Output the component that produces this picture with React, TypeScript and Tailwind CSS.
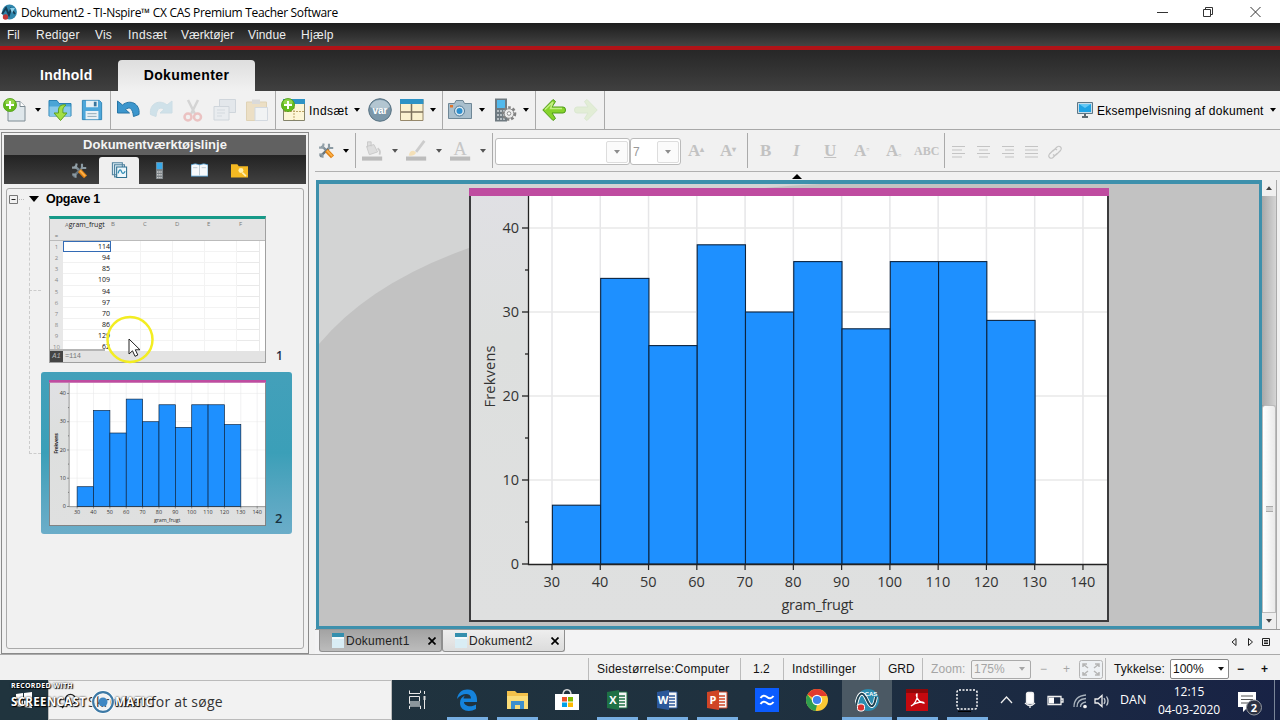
import { ReactNode } from "react";
import clsx from "clsx";

const FREQUENCIES = [7, 34, 26, 38, 30, 36, 28, 36, 36, 29];
const X_TICKS = [30, 40, 50, 60, 70, 80, 90, 100, 110, 120, 130, 140];
const SHEET_VALUES = [114, 94, 85, 109, 94, 97, 70, 86, 129, 62];

const xPos = (value: number) => 83 + ((value - 30) / 10) * 48.27;
const yPos = (value: number) => 376 - value * 8.4;

type HistogramProps = {
  className: string;
  small?: boolean;
};

function Histogram({ className, small }: HistogramProps) {
  const fontSize = small ? 16 : 14.5;
  return (
    <svg
      viewBox="0 0 640 434"
      preserveAspectRatio="none"
      className={className}
      fontFamily='"Open Sans", "Noto Sans", sans-serif'
      fontWeight="400"
      fill="#333"
    >
      <defs>
        <linearGradient id="page" x1="0" y1="0" x2="0" y2="1">
          <stop offset="0" stopColor="#e0e0e4" />
          <stop offset="0.35" stopColor="#dddfde" />
          <stop offset="1" stopColor="#dfe0e0" />
        </linearGradient>
      </defs>
      <rect width="640" height="434" fill="url(#page)" />
      <rect x="59" y="8" width="580" height="368" fill="#fff" />
      {X_TICKS.map((tick) => (
        <path key={tick} d={`M${xPos(tick)} 8V376`} stroke="#e6e6e8" strokeWidth="1.5" />
      ))}
      {[10, 20, 30, 40].map((tick) => (
        <path key={tick} d={`M60 ${yPos(tick)}H638`} stroke="#e9e9e9" strokeWidth="1.5" />
      ))}
      {FREQUENCIES.map((frequency, i) => (
        <rect
          key={i}
          x={xPos(30 + i * 10) + (small ? 0 : 0.4)}
          y={yPos(frequency)}
          width="48.27"
          height={frequency * 8.4}
          fill="#1e90ff"
          stroke="#0c2440"
          strokeWidth={small ? 2 : 1.1}
        />
      ))}
      <path d="M59.5 8V376.5H638" fill="none" stroke="#222" strokeWidth="1.3" />
      {X_TICKS.map((tick) => (
        <g key={tick}>
          <path d={`M${xPos(tick)} 376v6`} stroke="#222" strokeWidth="1.2" />
          <text x={xPos(tick) - 0.2} y="398.5" fontSize={fontSize} textAnchor="middle">
            {tick}
          </text>
        </g>
      ))}
      {[0, 10, 20, 30, 40].map((tick) => (
        <g key={tick}>
          <path d={`M53 ${yPos(tick)}h6`} stroke="#222" strokeWidth="1.3" />
          <text x="50" y={yPos(tick) + 5.3} fontSize={fontSize} textAnchor="end">
            {tick}
          </text>
        </g>
      ))}
      {[5, 15, 25, 35].map((tick) => (
        <path key={tick} d={`M56 ${yPos(tick)}h3`} stroke="#222" strokeWidth="1.3" />
      ))}
      <text
        transform="translate(26 188.5) rotate(-90)"
        fontSize={fontSize}
        textAnchor="middle"
        textLength="62"
        fontWeight={small ? 700 : 400}
      >
        Frekvens
      </text>
      <text x="348.5" y="421.5" fontSize={fontSize} textAnchor="middle" textLength={small ? 78 : 72}>
        gram_frugt
      </text>
      <path d="M1 8V433H639V8" fill="none" stroke="#3b3b3d" strokeWidth="2" />
      <rect width="640" height="8" fill="#bf4ca0" />
    </svg>
  );
}

function Caret({ className }: { className?: string }) {
  return (
    <svg viewBox="0 0 6 4" className={clsx("h-[4px] w-[6px] shrink-0", className)}>
      <path d="M0 0h6L3 3.8z" fill="currentColor" />
    </svg>
  );
}

type IconProps = {
  size?: string;
  className?: string;
  children: ReactNode;
};

function Icon({ size = "size-6", className, children }: IconProps) {
  return (
    <svg viewBox="0 0 24 24" fill="none" className={clsx("shrink-0", size, className)}>
      {children}
    </svg>
  );
}

function PlusBadge() {
  return (
    <>
      <circle cx="7" cy="7" r="6.6" fill="#65bb1d" stroke="#4b9a12" strokeWidth="0.7" />
      <ellipse cx="7" cy="4.2" rx="4.6" ry="3" fill="#a5e05b" opacity="0.7" />
      <path d="M7 3v8M3 7h8" stroke="#fff" strokeWidth="2" />
    </>
  );
}

function ToolsIcon({ size }: { size: string }) {
  return (
    <Icon size={size}>
      <path d="M3 20.5 16.5 7.5" stroke="#66757e" strokeWidth="3.4" />
      <path d="M15.5 2.500v6h6M1.8 17.500l4.400.4.3 4.400" stroke="#8b9aa3" strokeWidth="3" />
      <path d="M5 5.5 11 11" stroke="#7e8d96" strokeWidth="3.4" />
      <path d="M1.500 8h5.200L8 2" stroke="#92a0a8" strokeWidth="3" />
      <path d="m12 12 8.5 9" stroke="#e08214" strokeWidth="6" />
      <path d="m12.5 12 7.5 8" stroke="#fdb24a" strokeWidth="2.500" />
    </Icon>
  );
}

function TitleBar() {
  return (
    <div className="flex h-[23px] shrink-0 items-center bg-white text-black">
      <svg viewBox="0 0 16 16" className="ml-px size-4">
        <circle cx="8.5" cy="8" r="7.4" fill="#2f86ac" />
        <path d="M1 10 5 4l3 7 2-6 4 5" fill="none" stroke="#173e55" strokeWidth="2" />
        <path d="M9 4h5l-3 5z" fill="#8ed0e8" />
        <circle cx="4.5" cy="13" r="2.7" fill="#c33836" />
      </svg>
      <span className="ml-1 pt-[2px] font-['Open_Sans','Noto_Sans',sans-serif] text-[12px] tracking-[-0.310px] whitespace-nowrap">
        Dokument2 - TI-Nspire™ CX CAS Premium Teacher Software
      </span>
      <svg viewBox="0 0 110 12" className="mr-[14px] ml-auto h-3 w-[110px]" fill="none" stroke="#333">
        <path d="M1 6.500h11M47.500 3.500h7v7h-7zM49.500 3.500v-2h7v7h-2M94.500 1l10 10M104.500 1l-10 10" />
      </svg>
    </div>
  );
}

function MenuBar() {
  return (
    <div className="flex h-[27px] shrink-0 items-center border-b-4 border-[#b01217] bg-linear-to-b from-[#1d1d1d] to-[#434343] pl-[7px] text-[12px] text-[#eee]">
      <span className="w-[29px]">Fil</span>
      <span className="w-[59px] tracking-[0.250px]">Rediger</span>
      <span className="w-[33px] tracking-[0.200px]">Vis</span>
      <span className="w-[53px] tracking-[0.450px]">Indsæt</span>
      <span className="w-[67px] tracking-[0.050px]">Værktøjer</span>
      <span className="w-[53px] tracking-[0.150px]">Vindue</span>
      <span className="tracking-[0.300px]">Hjælp</span>
    </div>
  );
}

function WorkspaceTabs() {
  return (
    <div className="flex h-[41px] shrink-0 items-end bg-linear-to-b from-[#272727] to-[#404040] text-[14px] font-bold">
      <div className="flex h-[31px] w-[118px] items-center pl-[40px] tracking-[0.300px] text-white">Indhold</div>
      <div className="flex h-[31px] w-[137px] items-center justify-center rounded-t-[4px] bg-linear-to-b from-[#dedede] to-[#f1f1f1] tracking-[0.400px] text-black">
        Dokumenter
      </div>
    </div>
  );
}

function MainToolbar() {
  return (
    <div className="flex h-[39px] shrink-0 border-b border-[#a8a8a8] bg-[#f1f1f1] text-[12px] text-black">
      <div className="flex w-[111px] items-center border-r border-[#aaa] pl-[3px]">
        <Icon>
          <path d="M5 3.500h12l5 5V23H5z" fill="#dfe7eb" stroke="#7e8c94" />
          <path d="M17 3.500v5h5" fill="#fff" stroke="#7e8c94" />
          <PlusBadge />
        </Icon>
        <Caret className="ml-[8px]" />
        <Icon className="ml-[7px]">
          <path d="M1 18V2.500h8l2 3h12V18z" fill="#4aa5d6" stroke="#2a81b3" />
          <path d="M1.500 18V8.500h21V18z" fill="#87c8ea" />
          <path d="M18 7c-6-1-8 2-7.500 8H6l6.500 7.500L19 15h-4c-.5-4 0-5.500 3-8z" fill="#a4de45" stroke="#5ca01d" />
        </Icon>
        <Icon size="size-[22px]" className="ml-[9px]">
          <path d="M1.500 1.500H20l2.500 2.500v18.500h-21z" fill="#4ea7da" stroke="#2b82b5" />
          <path d="M5.500 2h13v7h-13zM5 13h14v9H5z" fill="#e9f1f5" />
          <path d="M14 3h3v5h-3z" fill="#39749c" />
          <path d="M7 16h10M7 19h10" stroke="#8aa5b3" />
        </Icon>
      </div>
      <div className="flex w-[165px] items-center border-r border-[#aaa] pl-[5px]">
        <Icon size="h-6 w-[25px]">
          <path d="M1 3v12h12l-4-3.500c4-3 7-1.500 8 7l5.500-2C24 5 13 1 6 7z" fill="#3c96cd" stroke="#2675a5" />
        </Icon>
        <Icon className="ml-[8px] opacity-35">
          <path d="M23 3v12H11l4-3.500c-4-3-7-1.500-8 7l-5.500-2C0 5 11 1 18 7z" fill="#91c6dd" stroke="#8abad0" />
        </Icon>
        <Icon className="ml-[8px] opacity-30">
          <path d="m7 2 7 14M17 2l-7 14" stroke="#929292" strokeWidth="2.500" />
          <circle cx="7" cy="19" r="3.500" stroke="#df5a57" strokeWidth="2.500" />
          <circle cx="16.500" cy="19" r="3.500" stroke="#df5a57" strokeWidth="2.500" />
        </Icon>
        <Icon className="ml-[8px] opacity-30">
          <path d="M6.500 1.500h16v13h-16z" fill="#c4d2df" stroke="#8398aa" />
          <path d="M1 8.500h15V22H1z" fill="#d8e3ec" stroke="#8398aa" />
          <path d="M4 12h8M4 15h8M4 18h5" stroke="#93a7b8" />
        </Icon>
        <Icon className="ml-[8px] opacity-40">
          <path d="M1.500 4h20v18.500h-20z" fill="#e5c684" stroke="#c6a55c" />
          <path d="M7 1.500h8V6H7z" fill="#b9b9b9" />
          <path d="M10 9.500h12.500v13H10z" fill="#f3f6f9" stroke="#a7b7c7" />
        </Icon>
      </div>
      <div className="flex w-[167px] items-center border-r border-[#aaa] pl-[5px]">
        <Icon>
          <path d="M2.500 1.500h21v21h-21z" fill="#fdf6d7" stroke="#85846b" />
          <path d="M2 1h22v5H2z" fill="#2e93c5" />
          <path d="M13 6v16M3 13.500h20" stroke="#bba467" strokeDasharray="2 1" />
          <PlusBadge />
        </Icon>
        <span className="ml-[4px] w-[40px] pt-[2px] tracking-[0.450px]">Indsæt</span>
        <Caret className="ml-[5px]" />
        <Icon className="ml-[8px]">
          <circle cx="12" cy="12" r="11.300" fill="#7b97a9" stroke="#587282" />
          <path d="M2 9a10.500 10 0 0 1 20 0c-6 3-14 3-20 0z" fill="#b3c6d1" />
          <text
            x="12"
            y="15.500"
            fill="#fff"
            fontFamily='"Liberation Sans", sans-serif'
            fontSize="10"
            fontWeight="700"
            textAnchor="middle"
          >
            var
          </text>
        </Icon>
        <Icon className="ml-[8px]">
          <path d="M.5 1.500h22.500v21H.5z" fill="#fbf2d0" stroke="#96886b" />
          <path d="M0 1h23.500v5H0z" fill="#2e93c5" />
          <path d="M11.500 6v16M1 14h22" stroke="#7d725c" strokeWidth="1.500" />
        </Icon>
        <Caret className="ml-[6px]" />
      </div>
      <div className="flex w-[93px] items-center border-r border-[#aaa] pl-[5px]">
        <Icon>
          <path d="M.5 5.500h6L8 2.500h7l1.500 3h7v15H.5z" fill="#a9bfcd" stroke="#6f8796" />
          <circle cx="11.500" cy="13" r="5" fill="#d9e7ef" stroke="#527b98" />
          <circle cx="11.500" cy="13" r="3" fill="#2f8fce" />
          <path d="M2 7h3v2.500H2z" fill="#e27429" />
        </Icon>
        <Caret className="ml-[7px]" />
        <Icon className="ml-[9px]">
          <path d="M1 .5h12v23H1z" fill="#6f7a81" />
          <path d="M3 2h8v8H3z" fill="#52b9ec" />
          <path d="M3 13h8M3 17h8M3 21h8" stroke="#cfd5d8" strokeWidth="1.500" strokeDasharray="2 1" />
          <circle cx="15" cy="15.500" r="5.800" stroke="#818181" strokeWidth="3" strokeDasharray="2.500 1.800" />
          <circle cx="15" cy="15.500" r="4.800" fill="#ececec" stroke="#8d8d8d" />
          <circle cx="15" cy="15.500" r="1.800" fill="#fff" stroke="#8d8d8d" />
        </Icon>
        <Caret className="ml-[5px]" />
      </div>
      <div className="flex w-[69px] items-center border-r border-[#aaa] pl-[6px]">
        <Icon>
          <path d="M.8 12 11 1.500l2.500 2L10 9h11q2.500 0 2.500 3T21 15H10l3.500 5.500-2.500 2z" fill="#86d32c" stroke="#4e9a18" />
          <path d="M3 11.500 11 4 8.500 10.500H20" stroke="#c3ef83" strokeWidth="1.500" />
        </Icon>
        <Icon className="ml-[8px] opacity-25">
          <path d="M23.200 12 13 1.500l-2.500 2L14 9H3q-2.500 0-2.500 3T3 15h11l-3.500 5.500 2.500 2z" fill="#b6e389" stroke="#9cce74" />
        </Icon>
      </div>
      <div className="ml-auto flex items-center pr-[4px]">
        <svg viewBox="0 0 16 16" className="size-4">
          <path d="M.5.500h15v11H.5z" fill="#c8dce8" stroke="#5e7685" />
          <path d="M2 2h12v8H2z" fill="#1fa3e4" />
          <path d="m2 2 6 4 6-4z" fill="#64c8f5" />
          <path d="M5 15h6M8 12v3" stroke="#5e6a71" strokeWidth="2" />
        </svg>
        <span className="ml-[4px] w-[167px] pt-[2px] tracking-[0.270px] whitespace-nowrap">
          Eksempelvisning af dokument
        </span>
        <Caret className="ml-[6px]" />
      </div>
    </div>
  );
}

function SheetThumbnail() {
  return (
    <div className="flex h-[147px] w-[217px] flex-col border border-t-[3px] border-[#a0a0a0] border-t-[#179a88] bg-white font-['Open_Sans',sans-serif] text-[7px] leading-none font-normal text-[#111]">
      <div className="grid h-[22px] shrink-0 grid-cols-[13px_48px_32px_32px_32px_32px_1fr] border-b border-[#bbb] bg-[#e4e4e4] pt-[2px] text-[6px] text-[#777]">
        <span className="pt-[12px] text-center">=</span>
        <span className="pl-[2px] whitespace-nowrap">
          A<span className="text-[7px] text-[#222]">gram_frugt</span>
        </span>
        <span>B</span>
        <span>C</span>
        <span>D</span>
        <span>E</span>
        <span>F</span>
      </div>
      <div className="relative h-[110px] overflow-hidden">
        {SHEET_VALUES.map((value, i) => (
          <div key={i} className="grid h-[11.150px] grid-cols-[13px_48px_30px_32px_32px_32px_1fr]">
            <span className="bg-[#e8e8e8] pt-[3px] text-center text-[6px] text-[#888]">{i + 1}</span>
            <span
              className={clsx(
                "text-right",
                i === 0
                  ? "border border-[#336bb5] pt-[1px]"
                  : "border-b border-[#f1f1f1] pt-[2px] pr-px"
              )}
            >
              {value}
            </span>
            <span className="border-r border-b border-[#f3f3f3]" />
            <span className="border-r border-b border-[#f3f3f3]" />
            <span className="border-r border-b border-[#f3f3f3]" />
            <span className="border-r border-b border-[#f3f3f3]" />
            <span className="mr-[5px] border-r border-b border-[#e9e9e9]" />
          </div>
        ))}
        <div className="absolute bottom-0 left-0 h-[2px] w-[55px] bg-[#b5b5b5]" />
      </div>
      <div className="flex flex-1 items-center bg-[#e3e3e3] font-['Liberation_Mono',monospace] text-[7px] text-[#777]">
        <span className="flex h-full w-[13px] items-center justify-center bg-[#444] text-[#bbb] italic">A1</span>
        <span className="pl-[2px] tracking-[-0.300px]">=114</span>
      </div>
    </div>
  );
}

function DocumentPanel() {
  return (
    <div className="mt-[2px] ml-px flex h-[522px] w-[308px] shrink-0 flex-col border border-[#8a8a8a] p-[2px]">
      <div className="flex h-[20px] shrink-0 items-center justify-center bg-[#616161] text-[13px] font-bold text-[#f4f4f4]">
        Dokumentværktøjslinje
      </div>
      <div className="flex h-[29px] shrink-0 items-end bg-linear-to-b from-[#232323] to-[#414141] pl-[55px]">
        <span className="flex h-7 w-[40px] items-center justify-center">
          <ToolsIcon size="size-[17px]" />
        </span>
        <span className="flex h-[27px] w-[40px] items-center justify-center rounded-t-[3px] bg-[#efefef]">
          <Icon size="size-[17px]">
            <path d="M2 1h14v17H2zM5 4h14v17H5z" fill="#d6e8f1" stroke="#51829e" strokeWidth="1.500" />
            <path d="M8 7h14v15H8z" fill="#eef7fb" stroke="#2f7191" strokeWidth="1.500" />
            <path d="M10 16c2-7 4-5 5-2s3 3 5-1" stroke="#2e8cb5" strokeWidth="1.800" />
          </Icon>
        </span>
        <span className="flex h-7 w-[40px] items-center justify-center">
          <Icon size="size-[17px]">
            <path d="M7 0h10v24H7z" fill="#7d8488" />
            <path d="M8 1h8v9H8z" fill="#37a9e9" />
            <path d="M8.500 14h7M8.500 18h7M8.500 22h7" stroke="#d0d0d0" strokeWidth="2" strokeDasharray="2 1" />
          </Icon>
        </span>
        <span className="flex h-7 w-[40px] items-center justify-center">
          <Icon size="size-[17px]">
            <path d="M0 4q6-3 12 0 6-3 12 0v16H0z" fill="#f7fafc" stroke="#2e88c3" />
            <path d="M12 4v15M3 8h6M15 8h6" stroke="#a8b8c2" />
          </Icon>
        </span>
        <span className="flex h-7 w-[40px] items-center justify-center">
          <Icon size="size-[17px]">
            <path d="M0 3h9l2 3h13v16H0z" fill="#f5b922" />
            <circle cx="14" cy="12" r="3.500" fill="#fff0ae" />
            <path d="m16 15 5 5" stroke="#fff0ae" strokeWidth="2.500" />
          </Icon>
        </span>
      </div>
      <div className="mx-[2px] mt-[4px] h-[461px] rounded-[3px] border border-[#aaa] pt-[2px]">
        <div className="flex h-[16px] items-center pl-[2px] text-[12.500px] font-bold text-black">
          <svg viewBox="0 0 18 9" className="h-[9px] w-[18px]" fill="none" stroke="#777">
            <path d="M.5.500h8v8h-8z" />
            <path d="M2.500 4.500h4" stroke="#222" />
            <path d="M10 4.500h5" stroke="#bbb" strokeDasharray="1 1" />
          </svg>
          <svg viewBox="0 0 10 6" className="ml-[2px] h-[6px] w-[10px]">
            <path d="M0 0h10L5 6z" />
          </svg>
          <span className="ml-[7px] tracking-[-0.280px]">Opgave 1</span>
        </div>
        <div className="flex pl-[22px]">
          <div className="w-[12px]">
            <div className="h-[84px] border-b border-l border-dashed border-[#ccc]" />
            <div className="h-[163px] border-b border-l border-dashed border-[#ccc]" />
          </div>
          <div className="pt-[9px]">
            <div className="flex w-[250px] items-end pl-[8px] text-[12px] text-[#1f2b44]">
              <SheetThumbnail />
              <span className="pl-[10px] font-['Open_Sans',sans-serif] leading-[14px] font-semibold">1</span>
            </div>
            <div className="mt-[9px] flex h-[162px] w-[251px] items-end rounded-[3px] bg-linear-to-b from-[#43a0ba] via-[#3b9fb8] via-50% to-[#6badc9] pb-[8px] pl-[8px] text-[13px] text-[#17303e]">
              <Histogram className="h-[146px] w-[217px]" small />
              <span className="pl-[9px] font-['Open_Sans',sans-serif] leading-[15px] font-semibold">2</span>
            </div>
          </div>
        </div>
      </div>
    </div>
  );
}

type FormatLetterProps = {
  size?: string;
  className?: string;
  children: ReactNode;
};

function FormatLetter({ size = "text-[17px]", className, children }: FormatLetterProps) {
  return (
    <span className={clsx("font-['Liberation_Serif',serif] leading-none font-bold text-[#c2c2c2]", size, className)}>
      {children}
    </span>
  );
}

function FormatToolbar() {
  return (
    <div className="flex h-[42px] shrink-0 border-b border-[#b0b0b0]">
      <div className="my-[3px] flex w-[41px] items-center border-r border-[#aaa] pl-[3px]">
        <ToolsIcon size="size-[17px]" />
        <Caret className="ml-[8px]" />
      </div>
      <div className="my-[3px] flex w-[137px] items-center border-r border-[#aaa] pl-[6px]">
        <Icon size="h-6 w-[22px]">
          <path d="m5 7 8-2 4 8-9 3zM6 8V2h4v5" fill="#dedede" stroke="#c8c8c8" />
          <path d="M17 9q4 3 2 7" stroke="#ccc" strokeWidth="2" />
          <path d="M0 18h22v4.500H0z" fill="#bcbcbc" />
        </Icon>
        <Caret className="ml-[8px] text-[#555]" />
        <Icon size="h-6 w-[22px]" className="ml-[8px]">
          <path d="M20 1 11 13" stroke="#ccc" strokeWidth="3" />
          <path d="M3 17q1-6 6-5l2 2q-2 4-8 3z" fill="#f4e0b8" />
          <path d="M0 18h22v4.500H0z" fill="#bcbcbc" />
        </Icon>
        <Caret className="ml-[8px] text-[#555]" />
        <Icon size="h-6 w-[22px]" className="ml-[8px]">
          <text x="11" y="16" fill="#c6c6c6" fontFamily='"Liberation Serif", serif' fontSize="20" textAnchor="middle">
            A
          </text>
          <path d="M0 18h22v4.500H0z" fill="#bcbcbc" />
        </Icon>
        <Caret className="ml-[8px] text-[#555]" />
      </div>
      <div className="my-[3px] flex w-[255px] items-center border-r border-[#aaa] pl-[2px]">
        <div className="mt-[2px] flex h-[27px] w-[135px] items-center justify-end rounded-[3px] border border-[#bbb] bg-white p-px">
          <span className="flex h-[22px] w-[22px] items-center justify-center rounded-[2px] border border-[#ddd] bg-[#fbfbfb] text-[#8c8c8c]">
            <Caret />
          </span>
        </div>
        <div className="mt-[2px] flex h-[27px] w-[51px] items-center justify-between rounded-[3px] border border-[#bbb] bg-white p-px pl-[2px] text-[12px] text-[#999]">
          7
          <span className="flex h-[22px] w-[22px] items-center justify-center rounded-[2px] border border-[#ddd] bg-[#fbfbfb] text-[#8c8c8c]">
            <Caret />
          </span>
        </div>
        <FormatLetter className="ml-[7px] w-[32px]">
          A<sup className="text-[8px]">▴</sup>
        </FormatLetter>
        <FormatLetter>
          A<sup className="text-[8px]">▾</sup>
        </FormatLetter>
      </div>
      <div className="my-[3px] flex w-[197px] items-center border-r border-[#aaa] pl-[12px]">
        <FormatLetter className="w-[33px]">B</FormatLetter>
        <FormatLetter className="w-[31px] italic">I</FormatLetter>
        <FormatLetter className="w-[30px] underline">U</FormatLetter>
        <FormatLetter className="w-[32px]">
          A<sup className="text-[9px]">▫</sup>
        </FormatLetter>
        <FormatLetter className="w-[28px]">
          A<sub className="text-[9px]">▫</sub>
        </FormatLetter>
        <FormatLetter size="text-[12px]">ABC</FormatLetter>
      </div>
      <svg viewBox="0 0 110 14" className="mt-[15px] ml-[7px] h-[14px] w-[110px]" fill="none" stroke="#c4c4c4" strokeWidth="1.200">
        <path d="M0 1.500h13M0 5h10M0 8.500h13M0 12h10" />
        <path d="M25 1.500h13M27 5h9M25 8.500h13M27 12h9" />
        <path d="M50 1.500h12M53 5h9M50 8.500h12M53 12h9" />
        <path d="M73 1.500h13M73 5h13M73 8.500h13M73 12h13" />
        <path d="m101 6 4-4q2-1.500 3.500 0t0 3.500l-4 4q-2 1.500-3.500 0M105 8.500l-4 4q-2 1.500-3.500 0t0-3.500l4-4q2-1.500 3.500 0" />
      </svg>
    </div>
  );
}

function DocumentTab({ name, active }: { name: string; active?: boolean }) {
  return (
    <div
      className={clsx(
        "flex h-[22px] w-[123px] items-center rounded-b-[3px] border border-t-0 border-[#8f8f8f] pl-[12px]",
        active ? "bg-linear-to-b from-[#eee] to-[#dcdcdc]" : "bg-linear-to-b from-[#a3a3a3] to-[#bcbcbc]"
      )}
    >
      <svg viewBox="0 0 12 15" className="h-[15px] w-[12px]">
        <path d="M0 0h12v15H0z" fill="#d9edf5" />
        <path d="M0 0h12v4H0z" fill="#348fae" />
        <path d="M0 4h12v2H0z" fill="#f4fafc" />
      </svg>
      <span className="ml-[2px] w-[65px] tracking-[0.250px]">{name}</span>
      <svg viewBox="0 0 8 8" className="ml-[17px] size-[8px]" stroke="#000" strokeWidth="1.700">
        <path d="m.5.500 7 7M7.500.500l-7 7" />
      </svg>
    </div>
  );
}

function Workspace() {
  return (
    <div className="ml-[6px] flex flex-1 flex-col text-[12px]">
      <FormatToolbar />
      <div className="flex h-[8px] shrink-0 items-center pl-[477px]">
        <svg viewBox="0 0 10 5" className="h-[5px] w-[10px]">
          <path d="M5 0 10 5H0z" />
        </svg>
      </div>
      <div className="flex h-[449px] shrink-0">
        <div className="relative ml-px w-[946px] border-3 border-[#3d90ac] border-t-4 bg-[#d3d4d4]">
          <svg viewBox="319 184 940 442" preserveAspectRatio="none" className="absolute inset-0 size-full">
            <path d="M319 344Q370 283 469 248Q620 195 820 184H1259V626H319Z" fill="#c2c2c2" />
          </svg>
          <div className="relative pt-[4px] pl-[150px]">
            <Histogram className="h-[434px] w-[640px]" />
          </div>
        </div>
        <div className="flex w-[15px] flex-col border-r border-[#aaa] bg-linear-to-r from-[#999] to-[#ccc]">
          <div className="flex h-[16px] items-center justify-center bg-[#f0f0f0]">
            <Caret className="rotate-180 text-[#444]" />
          </div>
          <div className="h-[209px] bg-linear-to-r from-[#a9a9a9] to-[#d4d4d4]" />
          <div className="flex flex-1 items-center justify-center rounded-t-[3px] border border-[#bbb] bg-linear-to-r from-[#fff] to-[#eaeaea]">
            <div className="h-[6px] w-[7px] border-y border-[#aaa] bg-[#d5d5d5]" />
          </div>
          <div className="flex h-[16px] items-center justify-center bg-[#eee]">
            <Caret className="text-[#444]" />
          </div>
        </div>
      </div>
      <div className="flex flex-1 border-t border-[#999] bg-[#f3f3f4] pl-[4px] text-[#222]">
        <DocumentTab name="Dokument1" />
        <DocumentTab name="Dokument2" active />
        <svg viewBox="0 0 42 10" className="mt-[7px] mr-[9px] ml-auto h-[10px] w-[42px]" fill="none" stroke="#222">
          <path d="M7 1.500v7L3 5zM19.500 1.500v7L23.500 5z" />
          <path d="M33.500 1.500h7v7h-7zM35 3.500h4M35 5h4M35 6.500h4" />
        </svg>
      </div>
    </div>
  );
}

function StatusBar() {
  return (
    <div className="flex h-[26px] shrink-0 items-center border-t border-[#aaa] bg-[#f1f1f1] pt-[3px] pl-[588px] text-[12px] text-[#111]">
      <span className="flex h-full w-[152px] items-center border-l border-[#bbb] pl-[8px] tracking-[0.260px]">
        Sidestørrelse:Computer
      </span>
      <span className="flex h-full w-[43px] items-center border-l border-[#bbb] pl-[12px]">1.2</span>
      <span className="flex h-full w-[96px] items-center border-l border-[#bbb] pl-[8px] tracking-[0.280px]">
        Indstillinger
      </span>
      <span className="flex h-full w-[43px] items-center border-l border-[#bbb] pl-[8px]">GRD</span>
      <span className="flex h-full w-[183px] items-center border-l border-[#bbb] pl-[8px] text-[#a5a5a5]">
        <span className="w-[40px] tracking-[0.100px]">Zoom:</span>
        <span className="flex h-[19px] w-[60px] items-center justify-between rounded-[2px] border border-[#aaa] pr-[5px] pl-[2px] text-[12px]">
          175%
          <Caret />
        </span>
        <span className="ml-[9px]">−</span>
        <span className="ml-[16px]">+</span>
        <svg viewBox="0 0 24 19" className="ml-[9px] h-[19px] w-[24px]" fill="none" stroke="#b5b5b5">
          <rect x=".5" y=".5" width="23" height="18" rx="2" fill="#eef1f4" />
          <path d="M4 7V4h4M16 4h4v3M4 12v3h4M16 15h4v-3M4 4l5 4M20 4l-5 4M4 15l5-4M20 15l-5-4" strokeWidth="1.500" />
        </svg>
      </span>
      <span className="flex h-full flex-1 items-center border-l border-[#bbb] pl-[8px]">
        <span className="w-[56px] tracking-[0.100px]">Tykkelse:</span>
        <span className="flex h-[20px] w-[59px] items-center justify-between rounded-[2px] border border-[#888] bg-white pr-[4px] pl-[2px] text-[12px]">
          100%
          <Caret />
        </span>
        <span className="ml-[8px] font-bold">−</span>
        <span className="ml-[17px] font-bold">+</span>
      </span>
    </div>
  );
}

type TaskProps = {
  open?: boolean;
  current?: boolean;
  children: ReactNode;
};

function Task({ open, current, children }: TaskProps) {
  return (
    <div
      className={clsx(
        "flex h-10 w-[50px] shrink-0 flex-col items-center justify-end",
        current && "bg-[#4b5964]"
      )}
    >
      <Icon className="mb-[5px]">{children}</Icon>
      <div className={clsx("h-[3px]", current ? "w-[50px]" : "w-[41px]", open && "bg-[#76aee2]")} />
    </div>
  );
}

function OfficeMark({ letter, color }: { letter: string; color: string }) {
  return (
    <>
      <path d="M12 4h10v16H12z" fill="#f6f6f6" stroke={color} />
      <path d="M14 8h6M14 11h6M14 14h6M14 17h6" stroke={color} strokeWidth="1.500" />
      <path d="M2 4 14 2v20L2 20z" fill={color} />
      <text x="8" y="16" fill="#fff" fontFamily='"Open Sans", sans-serif' fontSize="11" fontWeight="700" textAnchor="middle">
        {letter}
      </text>
    </>
  );
}

function Watermark() {
  return (
    <div className="absolute bottom-0 left-[11px] h-[40px] w-[160px] font-['Open_Sans',sans-serif] font-bold text-white [text-shadow:0_0_2px_#000,1px_1px_1px_#000]">
      <div className="pt-[1px] text-[7px] leading-[9px] tracking-[0.320px]">RECORDED WITH</div>
      <div className="flex items-center text-[11.500px] leading-[16px] whitespace-nowrap">
        <span className="w-[80px] tracking-[0.350px]">SCREENCAST</span>
        <svg viewBox="0 0 24 24" className="size-[24px] shrink-0">
          <circle cx="12" cy="12" r="9.800" fill="none" stroke="#fff" strokeWidth="3.800" />
          <circle cx="12" cy="12" r="9.800" fill="none" stroke="#3c79a5" strokeWidth="2.200" />
          <circle cx="12" cy="12" r="4.500" fill="#3e87c3" />
        </svg>
        <span className="tracking-[0.300px]">MATIC</span>
      </div>
    </div>
  );
}

function Taskbar() {
  return (
    <div className="relative flex h-10 shrink-0 bg-linear-to-r from-[#20343e] via-[#1f313f] via-60% to-[#182245] font-['Open_Sans','Noto_Sans',sans-serif] text-white">
      <div className="flex w-[48px] items-center justify-center">
        <svg viewBox="0 0 16 16" className="size-4" fill="#fff">
          <path d="m0 2 7-1v6.500H0zM8 1l8-1v7.500H8zM0 8.500h7V15l-7-1zM8 8.500h8V16l-8-1z" />
        </svg>
      </div>
      <div className="flex w-[344px] items-center border border-[#bbb] bg-[#f2f2f2] pt-[2px] pl-[12px] text-[14px] text-[#333]">
        <svg viewBox="0 0 18 18" className="size-[17px]" fill="none" stroke="#222" strokeWidth="1.400">
          <circle cx="10" cy="7" r="5.500" />
          <path d="m6 11-5 5" />
        </svg>
        <span className="ml-[10px] tracking-[0.220px]">Skriv her for at søge</span>
      </div>
      <Task>
        <path d="M4.500 5V2.500M4 5.500h11M15.500 5V2.500M4.500 8.500h10v7h-10zM4.500 21v-3h11v3M19.500 3v3M19.500 8v13" stroke="#e8e8e8" />
        <path d="M5 13h10v5H5z" fill="#8b969c" />
        <path d="M18.500 8h2v4h-2z" fill="#ddd" />
      </Task>
      <Task open>
        <path
          d="M2 11C3 4 8 1 13 1.500c6 0 9 5 9 10.500v2H9c0 4 7 6 12 2.500V21c-7 4-16 2-16-6 0-4 2-6 5-7.500-1 1-1.500 2-1.500 3H16c0-6-9-6-14 .5z"
          fill="#1583dc"
        />
      </Task>
      <Task open>
        <path d="M2 3h8l2 2h11v16H2z" fill="#f3c14b" />
        <path d="M2 8h21v13H2z" fill="#fbdc78" />
        <path d="M6 21v-8h13v8h-4v-4h-5v4z" fill="#3e8fce" />
      </Task>
      <Task>
        <path d="M8 7c0-7 8-7 8 0" stroke="#ddd" strokeWidth="1.500" />
        <path d="M0 6h24v16H0z" fill="#fff" />
        <path d="M7 9h5v4.500H7z" fill="#ec5129" />
        <path d="M13 9h5v4.500h-5z" fill="#7fba00" />
        <path d="M7 14.500h5V19H7z" fill="#00a0e8" />
        <path d="M13 14.500h5V19h-5z" fill="#fdb900" />
      </Task>
      <Task open>
        <OfficeMark letter="X" color="#1e7145" />
      </Task>
      <Task open>
        <OfficeMark letter="W" color="#2b579a" />
      </Task>
      <Task open>
        <OfficeMark letter="P" color="#d04526" />
      </Task>
      <Task>
        <path d="M0 0h24v24H0z" fill="#0b5cff" />
        <path d="M5.500 10q3-4 6.500-1t6.500-1M5.500 16q3-4 6.500-1t6.500-1" stroke="#fff" strokeWidth="2" />
      </Task>
      <Task>
        <circle cx="12" cy="12" r="11" fill="#fcc934" />
        <path d="M12 12 2.500 6.500A11 11 0 0 1 21.500 6.500L22 8H12z" fill="#e33b2e" />
        <path d="M2.500 6.500 8.500 14.500 12 17l-1.500 6A11 11 0 0 1 2.500 6.500z" fill="#2f9e4f" />
        <circle cx="12" cy="12" r="5.200" fill="#fff" />
        <circle cx="12" cy="12" r="4.100" fill="#3f82ee" />
      </Task>
      <Task open current>
        <circle cx="13" cy="12" r="11" fill="#2b8cae" />
        <path d="M1 17C4 3 8 3 12 12s7 8 9-3" stroke="#fff" strokeWidth="3.800" />
        <path d="M1 17C4 3 8 3 12 12s7 8 9-3" stroke="#1d4150" strokeWidth="2" />
        <text x="16" y="8" fill="#fff" fontFamily='"Liberation Sans", sans-serif' fontSize="6" fontWeight="700" textAnchor="middle">
          CAS
        </text>
        <rect x="2.500" y="16" width="7" height="7" rx="2.500" fill="#d8322e" stroke="#fff" />
      </Task>
      <Task open>
        <path d="M1 1h22v22H1z" fill="#c4090f" />
        <path d="M1 1h22v4H1z" fill="#8c0709" />
        <path d="M6 18c3-1 7-7 6-12-2 0 1 9 7 9 0-2-8-1-13 3z" stroke="#fff" strokeWidth="1.300" />
      </Task>
      <Task open>
        <rect x="2" y="2" width="20" height="19" rx="2" stroke="#fff" strokeWidth="1.500" strokeDasharray="2 1.500" />
        <path d="M3 23.500h13" stroke="#000" strokeWidth="1.500" />
      </Task>
      <svg viewBox="0 0 116 20" className="mt-[11px] ml-[7px] h-[20px] w-[116px] shrink-0" fill="none" stroke="#eee" strokeWidth="1.300">
        <path d="m2 12 5.500-6 5.500 6" />
        <rect x="27.500" y="1.500" width="7" height="11" rx="1.500" fill="#fff" />
        <path d="M26 12q5 5 10 0M31 15v2" />
        <path d="M49 5.500h13v8H49zM62 8h2v3h-2" />
        <path d="M50 6.500h5v6h-5z" fill="#fff" stroke="none" />
        <path d="M75 16Q75 5 87 4M78 16q0-8 9-8.500M81.500 16q0-4 5.500-5" stroke="#a8b2bc" />
        <circle cx="86" cy="15.500" r="1.200" fill="#fff" />
        <path d="M96 8h3l4-3.500v11L99 12h-3z" />
        <path d="M105 7q2 3 0 6M107.500 5.500q3 4.500 0 9" stroke="#c3c9d0" />
      </svg>
      <span className="ml-[5px] flex w-[34px] items-center text-[12.500px]">DAN</span>
      <div className="flex w-[67px] flex-col items-center text-[12px] leading-[18px] whitespace-nowrap">
        <span className="pt-[3px] pl-[3px]">12:15</span>
        <span className="pl-[3px] tracking-[-0.050px]">04-03-2020</span>
      </div>
      <svg viewBox="0 0 28 28" className="mt-[8px] ml-[15px] size-[28px] shrink-0">
        <path d="M2 4h18v15h-8l-5 5v-5H2z" fill="#fff" />
        <path d="M5 8h12M5 11.500h12M5 15h7" stroke="#555" />
        <circle cx="18" cy="19.500" r="7.500" fill="#2c3142" stroke="#959aa3" />
        <text x="18" y="23.500" fill="#fff" fontFamily='"Open Sans", sans-serif' fontSize="11" fontWeight="700" textAnchor="middle">
          2
        </text>
      </svg>
      <div className="ml-auto h-full w-[6px] border-l border-[#7b8698]" />
      <Watermark />
    </div>
  );
}

export default function App() {
  return (
    <div className="relative flex h-[720px] w-[1280px] flex-col overflow-hidden bg-[#f1f1f1] font-['Liberation_Sans',Arial,sans-serif]">
      <TitleBar />
      <MenuBar />
      <WorkspaceTabs />
      <MainToolbar />
      <div className="flex h-[524px] shrink-0">
        <DocumentPanel />
        <Workspace />
      </div>
      <StatusBar />
      <Taskbar />
      <svg viewBox="0 0 50 50" className="absolute top-[315px] left-[105px] size-[50px]">
        <circle cx="25" cy="24.500" r="22.500" fill="none" stroke="#f3ed22" strokeWidth="2.500" />
        <path d="M24 24v15l3.500-3.200 2.500 5.500 2.800-1.300-2.500-5.200H35z" fill="#fff" stroke="#222" />
      </svg>
    </div>
  );
}
